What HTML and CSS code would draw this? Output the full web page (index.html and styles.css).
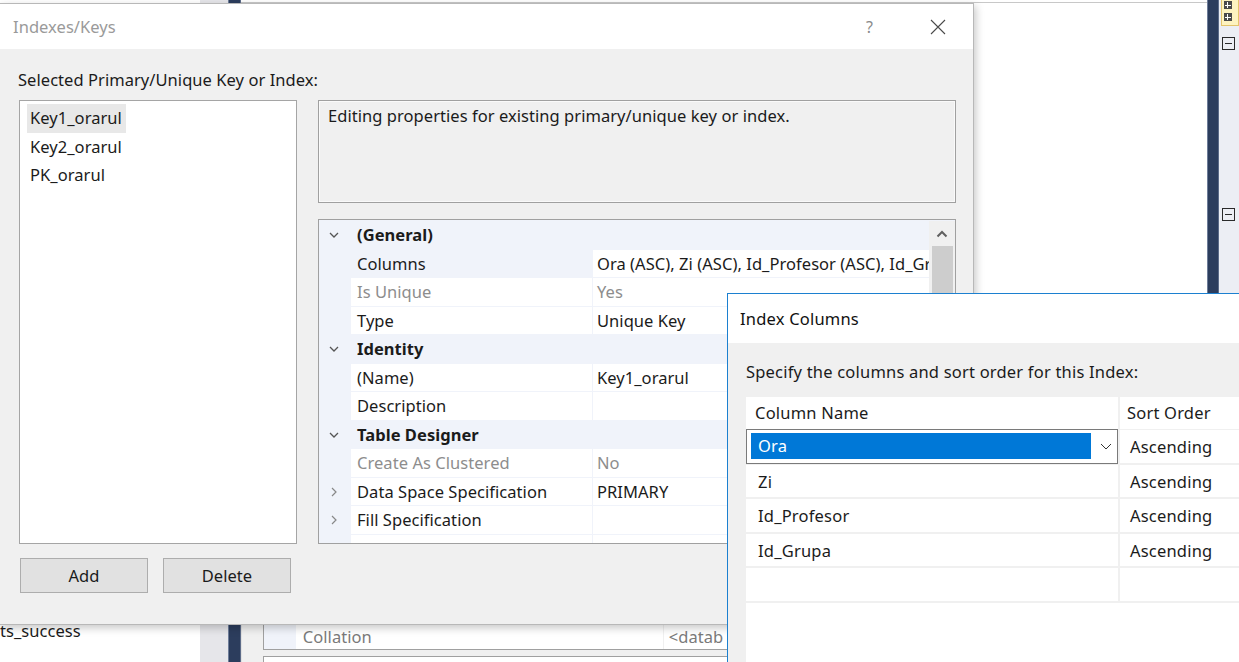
FILE: index.html
```html
<!DOCTYPE html>
<html>
<head>
<meta charset="utf-8">
<link rel="stylesheet" href="styles.css">
</head>
<body>
<div class="desktop">
  <!-- background: table designer -->
  <div class="bg">
    <div class="bg-left"><span class="bg-text">ts_success</span></div>
    <div class="bg-gray"></div>
    <div class="bg-navy"></div>
    <div class="bg-designer">
      <div class="bg-toprow"><span class="c1">Id_Disciplina</span><span class="c2">int</span></div>
      <div class="bg-spacer"></div>
      <div class="bg-props">
        <div class="bg-propbox">
          <div class="bg-gut"></div>
          <div class="bg-name">Collation</div>
          <div class="bg-val">&lt;datab</div>
        </div>
        <div class="bg-propbox2"></div>
      </div>
    </div>
    <div class="bg-navy bg-navy2"></div>
    <div class="bg-panel">
      <div class="bg-yellow"><span class="mini"></span><span class="mini"></span></div>
      <div class="collapse c-a"></div>
      <div class="collapse c-b"></div>
    </div>
  </div>

  <!-- Indexes/Keys dialog -->
  <div class="dlg-main">
    <div class="titlebar">
      <span class="title">Indexes/Keys</span>
      <span class="help">?</span>
      <svg class="close" width="16" height="16" viewBox="0 0 16 16"><path d="M1 1L15 15M15 1L1 15" stroke="#4a4a4a" stroke-width="1.1" fill="none"/></svg>
    </div>
    <div class="main-body">
      <div class="label">Selected Primary/Unique Key or Index:</div>
      <div class="main-row">
        <div class="left-col">
          <div class="listbox">
            <div class="item selected">Key1_orarul</div>
            <div class="item">Key2_orarul</div>
            <div class="item">PK_orarul</div>
          </div>
          <div class="buttons">
            <div class="btn">Add</div>
            <div class="btn">Delete</div>
          </div>
        </div>
        <div class="right-col">
          <div class="desc">Editing properties for existing primary/unique key or index.</div>
          <div class="pgrid">
            <div class="prows">
              <div class="prow cat"><span class="gut"><svg width="10" height="6" viewBox="0 0 10 6"><path d="M1 1L5 5L9 1" stroke="#555" stroke-width="1.3" fill="none"/></svg></span><span class="cname">(General)</span></div>
              <div class="prow sel"><span class="gut"></span><span class="pn">Columns</span><span class="pv">Ora (ASC), Zi (ASC), Id_Profesor (ASC), Id_Grupa (ASC)</span></div>
              <div class="prow dis"><span class="gut"></span><span class="pn">Is Unique</span><span class="pv">Yes</span></div>
              <div class="prow"><span class="gut"></span><span class="pn">Type</span><span class="pv">Unique Key</span></div>
              <div class="prow cat"><span class="gut"><svg width="10" height="6" viewBox="0 0 10 6"><path d="M1 1L5 5L9 1" stroke="#555" stroke-width="1.3" fill="none"/></svg></span><span class="cname">Identity</span></div>
              <div class="prow"><span class="gut"></span><span class="pn">(Name)</span><span class="pv">Key1_orarul</span></div>
              <div class="prow"><span class="gut"></span><span class="pn">Description</span><span class="pv"></span></div>
              <div class="prow cat"><span class="gut"><svg width="10" height="6" viewBox="0 0 10 6"><path d="M1 1L5 5L9 1" stroke="#555" stroke-width="1.3" fill="none"/></svg></span><span class="cname">Table Designer</span></div>
              <div class="prow dis"><span class="gut"></span><span class="pn">Create As Clustered</span><span class="pv">No</span></div>
              <div class="prow"><span class="gut"><svg width="6" height="10" viewBox="0 0 6 10"><path d="M1 1L5 5L1 9" stroke="#888" stroke-width="1.2" fill="none"/></svg></span><span class="pn">Data Space Specification</span><span class="pv">PRIMARY</span></div>
              <div class="prow"><span class="gut"><svg width="6" height="10" viewBox="0 0 6 10"><path d="M1 1L5 5L1 9" stroke="#888" stroke-width="1.2" fill="none"/></svg></span><span class="pn">Fill Specification</span><span class="pv"></span></div>
              <div class="prow"><span class="gut"></span><span class="pn"></span><span class="pv"></span></div>
            </div>
            <div class="vscroll">
              <div class="sarrow"><svg width="12" height="8" viewBox="0 0 12 8"><path d="M1.5 6.5L6 2L10.5 6.5" stroke="#606060" stroke-width="2" fill="none"/></svg></div>
              <div class="sthumb"></div>
            </div>
          </div>
        </div>
      </div>
    </div>
  </div>

  <!-- Index Columns dialog -->
  <div class="dlg-index">
    <div class="titlebar2"><span class="title2">Index Columns</span></div>
    <div class="idx-body">
      <div class="label">Specify the columns and sort order for this Index:</div>
      <div class="igrid">
        <div class="irow ihead"><div class="ic1">Column Name</div><div class="ic2">Sort Order</div></div>
        <div class="irow"><div class="ic1 editing"><div class="combo"><div class="combo-sel">Ora</div><svg class="combo-arrow" width="12" height="7" viewBox="0 0 12 7"><path d="M1 1L6 6L11 1" stroke="#333" stroke-width="1" fill="none"/></svg></div></div><div class="ic2">Ascending</div></div>
        <div class="irow"><div class="ic1">Zi</div><div class="ic2">Ascending</div></div>
        <div class="irow"><div class="ic1">Id_Profesor</div><div class="ic2">Ascending</div></div>
        <div class="irow"><div class="ic1">Id_Grupa</div><div class="ic2">Ascending</div></div>
        <div class="irow"><div class="ic1"></div><div class="ic2"></div></div>
      </div>
    </div>
  </div>
</div>
</body>
</html>
```
FILE: styles.css
```css
* { box-sizing: border-box; }
html, body { margin: 0; padding: 0; }
body {
  width: 1239px;
  height: 662px;
  overflow: hidden;
  background: #fff;
  font-family: "Noto Sans", "Open Sans", sans-serif;
  font-size: 16.5px;
  letter-spacing: 0.05px;
  color: #1b1b1b;
}
.desktop { position: relative; width: 1239px; height: 662px; overflow: hidden; }

/* ---------- background ---------- */
.bg { position: absolute; inset: 0; display: flex; }
.bg-left { width: 200px; display: flex; flex-direction: column; justify-content: flex-end; padding-bottom: 20px; overflow: hidden; }
.bg-text { margin-left: 0; line-height: 22px; }
.bg-gray { width: 28px; background: #e6e6ea; }
.bg-navy { width: 13px; background: #2c3d5d; border-left: 1px solid #6e7d99; border-right: 1px solid #5c6b88; }
.bg-designer { width: 967px; display: flex; flex-direction: column; background: #fff; }
.bg-toprow { height: 3px; overflow: hidden; border-bottom: 1px solid #c8c8c8; position: relative; white-space: nowrap; }
.bg-toprow span { display: inline-block; margin-top: -15px; line-height: 18px; color: #2a2a6a; }
.bg-toprow .c1 { margin-left: 41px; }
.bg-toprow .c2 { margin-left: 136px; }
.bg-spacer { flex: 1; }
.bg-props { height: 37px; background: #f0f0f0; padding-left: 21px; border-left: 1px solid #e0e0e0; }
.bg-propbox { height: 25px; border: 1px solid #a0a0a0; border-top: none; display: flex; background: #fff; }
.bg-gut { width: 32px; background: #f0f3fa; }
.bg-name { width: 368px; padding-left: 7px; color: #7a7a7a; line-height: 24px; border-right: 1px solid #f0f0f0; }
.bg-val { padding-left: 5px; color: #7a7a7a; line-height: 24px; }
.bg-propbox2 { height: 12px; margin-top: 6px; border: 1px solid #a0a0a0; border-bottom: none; background: #fff; }
.bg-navy2 { width: 12px; }
.bg-panel { flex: 1; background: #eceef4; display: flex; flex-direction: column; align-items: flex-start; }
.bg-yellow { width: 18px; height: 26px; margin-left: 2px; background: #fdf3c0; border: 1px solid #e3c46c; border-top: none; display: flex; flex-direction: column; padding: 1px 0 0 2px; gap: 4px; }
.mini { display: block; width: 8px; height: 8px; background: #4a4a4a; position: relative; }
.mini::before { content: ""; position: absolute; left: 1px; right: 1px; top: 3.5px; height: 1px; background: #fff; }
.mini::after { content: ""; position: absolute; top: 1px; bottom: 1px; left: 3.5px; width: 1px; background: #fff; }
.collapse { width: 13px; height: 13px; border: 1.5px solid #2a2a2a; margin-left: 3px; position: relative; }
.collapse::after { content: ""; position: absolute; left: 2px; right: 2px; top: 4.5px; height: 1.5px; background: #2a2a2a; }
.c-a { margin-top: 11px; }
.c-b { margin-top: 158px; }

/* ---------- Indexes/Keys dialog ---------- */
.dlg-main {
  position: absolute; left: -1px; top: 3px; width: 975px; height: 622px;
  border: 1px solid #b8b8b8;
  background: #f0f0f0;
  box-shadow: 2px 3px 8px rgba(0,0,0,0.22);
  display: flex; flex-direction: column;
}
.titlebar { height: 45px; background: #fff; display: flex; align-items: center; padding-left: 13px; padding-right: 27px; }
.title { color: #9a9a9a; font-size: 16.5px; flex: 1; }
.help { color: #8a8a8a; font-size: 16px; margin-right: 57px; }
.close { display: block; }
.main-body { flex: 1; padding: 20px 0 0 18px; }
.label { line-height: 22px; white-space: nowrap; }
.main-row { display: flex; gap: 21px; margin-top: 9px; margin-left: 1px; }
.left-col { width: 278px; display: flex; flex-direction: column; }
.listbox { height: 444px; background: #fff; border: 1px solid #a5a5a5; padding: 3px 0 0 7px; }
.item { width: fit-content; height: 28.5px; line-height: 28px; padding: 0 4px 0 3px; }
.item.selected { background: #e8e8e8; }
.buttons { display: flex; gap: 15px; margin-top: 14px; margin-left: 1px; }
.btn { width: 128px; height: 35px; background: #e1e1e1; border: 1px solid #adadad; text-align: center; line-height: 33px; }
.right-col { width: 638px; display: flex; flex-direction: column; gap: 16px; }
.desc { height: 103px; border: 1px solid #a0a0a0; box-shadow: inset 0 0 0 1px #fafafa; padding: 4px 9px; line-height: 22px; }
.pgrid { height: 325px; border: 1px solid #a0a0a0; display: flex; background: #f0f3fa; padding-top: 1px; overflow: hidden; }
.prows { flex: 1; min-width: 0; display: flex; flex-direction: column; }
.prow { height: 28.5px; display: flex; flex-shrink: 0; }
.gut { width: 32px; flex-shrink: 0; display: flex; align-items: center; justify-content: center; padding-right: 2px; }
.pn { width: 241px; flex-shrink: 0; background: #fff; margin-bottom: 1px; padding-left: 6px; line-height: 27px; white-space: nowrap; overflow: hidden; }
.pv { flex: 1; min-width: 0; background: #fff; margin-bottom: 1px; margin-left: 1px; padding-left: 4px; line-height: 27px; white-space: nowrap; overflow: hidden; }
.prow.sel .pn { background: #f0f3fa; }
.prow.dis .pn, .prow.dis .pv { color: #8d8d8d; }
.prow.cat .cname { font-weight: bold; padding-left: 6px; line-height: 27px; }
.vscroll { width: 26px; flex-shrink: 0; background: #f0f0f0; display: flex; flex-direction: column; align-items: center; padding: 0 2px; }
.sarrow { height: 25px; display: flex; align-items: center; justify-content: center; }
.sthumb { width: 21px; height: 220px; background: #cdcdcd; }

/* ---------- Index Columns dialog ---------- */
.dlg-index {
  position: absolute; left: 727px; top: 293px; width: 530px; height: 380px;
  border: 1px solid #1c80d0;
  background: #f0f0f0;
  display: flex; flex-direction: column;
  letter-spacing: 0.2px;
}
.titlebar2 { height: 49px; background: #fff; display: flex; align-items: center; padding-left: 12px; }
.title2 { font-size: 16.5px; color: #111; }
.idx-body { flex: 1; padding: 18px 0 0 18px; display: flex; flex-direction: column; }
.igrid { flex: 1; margin-top: 14px; background: #fff; }
.irow { display: flex; height: 34.5px; border-bottom: 2px solid #f0f0f0; }
.irow.ihead { height: 33px; border-bottom: 1px solid #f0f0f0; }
.ic1 { width: 374px; flex-shrink: 0; border-right: 2px solid #f0f0f0; padding-left: 12px; line-height: 34px; white-space: nowrap; }
.ic2 { padding-left: 10px; line-height: 34px; white-space: nowrap; }
.ihead .ic1, .ihead .ic2 { line-height: 32px; }
.ihead .ic1 { padding-left: 9px; }
.ihead .ic2 { padding-left: 7px; }
.ic1.editing { padding: 0; }
.combo { height: 34.5px; margin-top: -1px; border: 1px solid #7a7a7a; display: flex; align-items: center; padding: 3px 0 3px 4px; }
.combo-sel { width: 340px; height: 26px; background: #0078d7; color: #fff; padding-left: 7px; line-height: 26px; }
.combo-arrow { margin-left: 9px; }
```
